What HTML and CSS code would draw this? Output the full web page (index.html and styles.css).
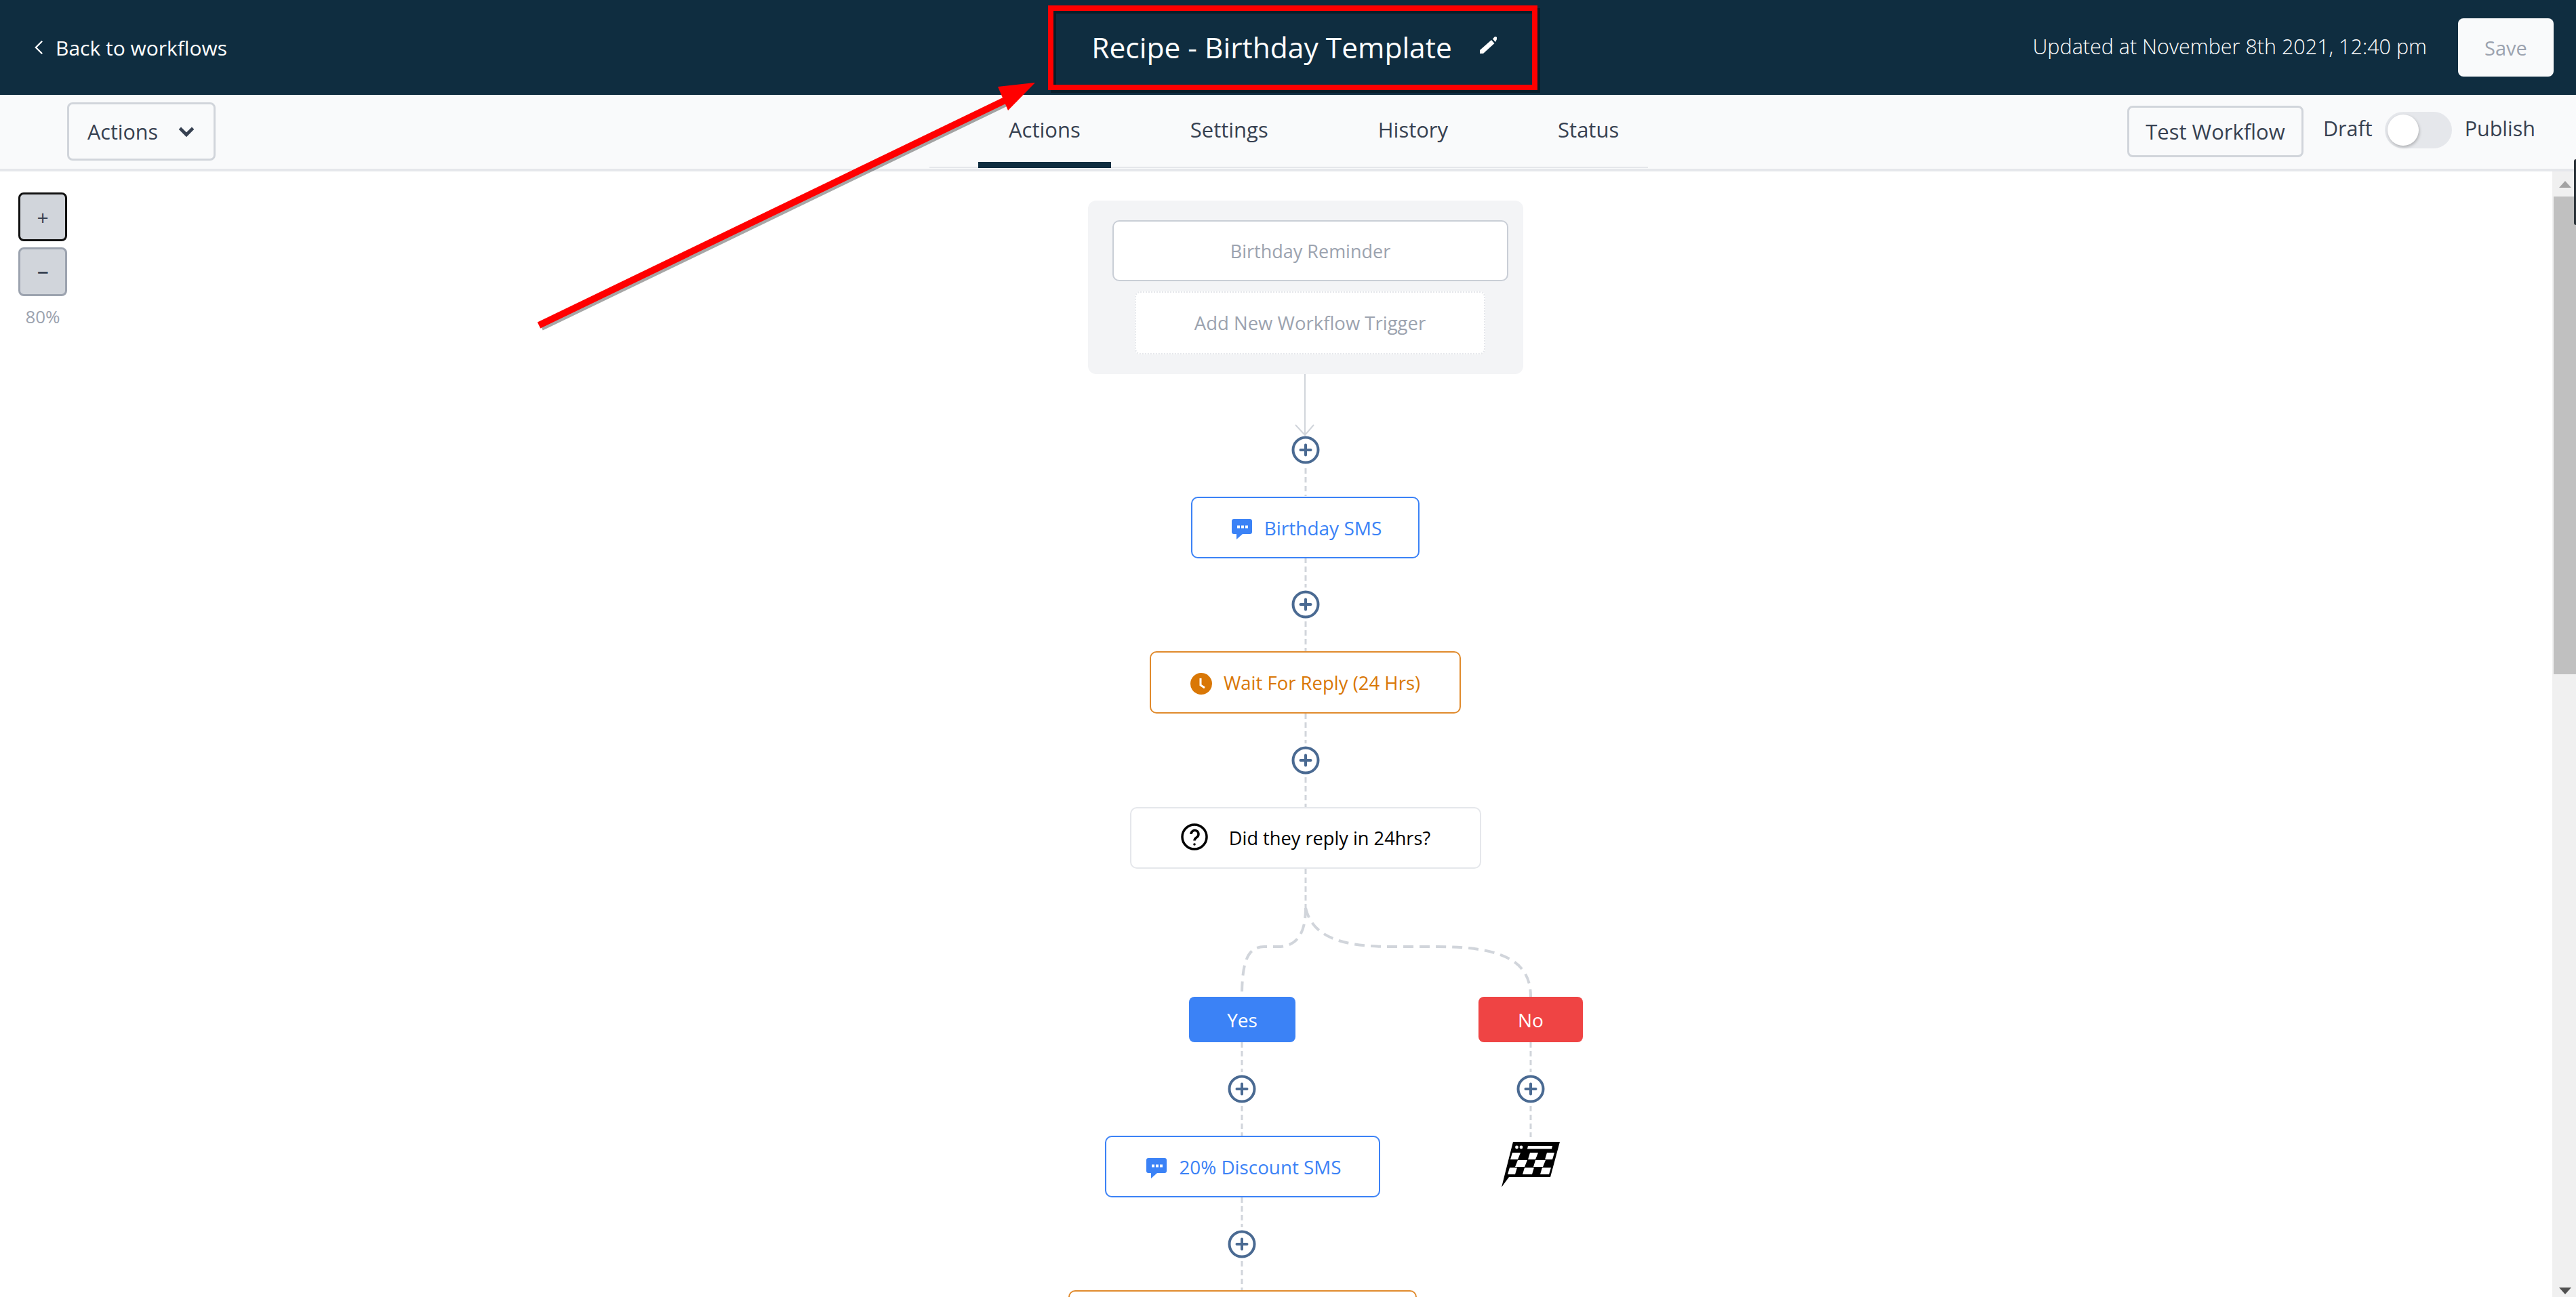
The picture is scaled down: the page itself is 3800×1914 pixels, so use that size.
FILE: index.html
```html
<!DOCTYPE html>
<html lang="en">
<head>
    <meta charset="UTF-8">
    <title>Recipe - Birthday Template</title>
    <link rel="stylesheet" href="styles.css">
</head>
<body>
    <header class="topbar">
        <a class="back-link">
            <svg class="back-icon" viewBox="0 0 14 24"><path d="M12 2 2 12l10 10"/></svg>
            <span>Back to workflows</span>
        </a>
        <div class="title-wrap">
            <h1>Recipe - Birthday Template</h1>
            <svg class="pencil" viewBox="0 0 25 26"><path d="M0 21 17 6l4.500 5L5 26H0z"/><path d="M19 4.500 21.500 1.500a2.500 2.500 0 0 1 3.500 3.500L23 9z"/></svg>
        </div>
        <div class="save-wrap">
            <span class="updated">Updated at November 8th 2021, 12:40 pm</span>
            <button class="save-btn">Save</button>
        </div>
    </header>

    <nav class="toolbar">
        <div class="toolbar-left">
            <button class="actions-btn">
                <span>Actions</span>
                <svg class="chevron" viewBox="0 0 22 14"><path d="M2 2l9 9 9-9"/></svg>
            </button>
        </div>
        <div class="tabs">
            <a class="tab tab-active">Actions</a>
            <a class="tab">Settings</a>
            <a class="tab">History</a>
            <a class="tab">Status</a>
        </div>
        <div class="toolbar-right">
            <button class="test-btn">Test Workflow</button>
            <span class="toggle-label">Draft</span>
            <span class="toggle"><span class="toggle-knob"></span></span>
            <span class="toggle-label">Publish</span>
        </div>
    </nav>

    <main class="canvas">
        <div class="zoom-controls">
            <button class="zoom-btn zoom-focus">+</button>
            <button class="zoom-btn zoom-minus">&minus;</button>
            <span class="zoom-value">80%</span>
        </div>

        <!-- connectors, page coordinates minus the 253px of bars -->
        <svg class="wires" viewBox="0 253 3800 1661">
            <path class="wire-solid" d="M1925 552V642M1911 627l14 15 13-15"/>
            <path class="wire-dash" d="M1926 691V732M1926 823V867M1926 917V961M1926 1053V1097M1926 1147V1191M1926 1282V1340"/>
            <path class="wire-dash" d="M1832 1538V1582M1832 1632V1676M1832 1767V1811M1832 1861V1904M2258 1538V1582M2258 1632V1678"/>
            <path class="wire-curve" d="M1926 1340C1926 1375 1915 1397 1885 1397H1865C1840 1397 1832 1420 1832 1471"/>
            <path class="wire-curve" d="M1926 1340C1935 1378 1970 1397 2050 1397H2120C2220 1397 2258 1420 2258 1471"/>
        </svg>

        <section class="trigger-card">
            <div class="trigger">Birthday Reminder</div>
            <div class="trigger-add">Add New Workflow Trigger</div>
        </section>

        <svg class="add add-1" viewBox="0 0 42 42"><circle cx="21" cy="21" r="18.500"/><path d="M21 13.500v15M13.500 21h15"/></svg>
        <svg class="add add-2" viewBox="0 0 42 42"><circle cx="21" cy="21" r="18.500"/><path d="M21 13.500v15M13.500 21h15"/></svg>
        <svg class="add add-3" viewBox="0 0 42 42"><circle cx="21" cy="21" r="18.500"/><path d="M21 13.500v15M13.500 21h15"/></svg>
        <svg class="add add-4" viewBox="0 0 42 42"><circle cx="21" cy="21" r="18.500"/><path d="M21 13.500v15M13.500 21h15"/></svg>
        <svg class="add add-5" viewBox="0 0 42 42"><circle cx="21" cy="21" r="18.500"/><path d="M21 13.500v15M13.500 21h15"/></svg>
        <svg class="add add-6" viewBox="0 0 42 42"><circle cx="21" cy="21" r="18.500"/><path d="M21 13.500v15M13.500 21h15"/></svg>

        <div class="node node-sms node-birthday">
            <svg class="node-icon sms-icon" viewBox="0 0 30 30"><path d="M3 0h24a3 3 0 0 1 3 3v16a3 3 0 0 1-3 3H16l-9 8v-8H3a3 3 0 0 1-3-3V3a3 3 0 0 1 3-3z"/><rect class="dot" x="8" y="9.500" width="4" height="4"/><rect class="dot" x="14" y="9.500" width="4" height="4"/><rect class="dot" x="20" y="9.500" width="4" height="4"/></svg>
            <span>Birthday SMS</span>
        </div>
        <div class="node node-wait node-reply">
            <svg class="node-icon clock-icon" viewBox="0 0 32 32"><circle cx="16" cy="16" r="16"/><path d="M15 8v10l6 4"/></svg>
            <span>Wait For Reply (24 Hrs)</span>
        </div>
        <div class="node node-cond">
            <svg class="node-icon help-icon" viewBox="0 0 40 40"><circle cx="20" cy="20" r="18"/><path d="M15 16a5.500 5.500 0 1 1 8.500 4.500c-2 1.300-3.500 2.300-3.500 5"/><circle class="help-dot" cx="20" cy="31" r="1.800"/></svg>
            <span>Did they reply in 24hrs?</span>
        </div>

        <div class="branch branch-yes">Yes</div>
        <div class="branch branch-no">No</div>

        <div class="node node-sms node-discount">
            <svg class="node-icon sms-icon" viewBox="0 0 30 30"><path d="M3 0h24a3 3 0 0 1 3 3v16a3 3 0 0 1-3 3H16l-9 8v-8H3a3 3 0 0 1-3-3V3a3 3 0 0 1 3-3z"/><rect class="dot" x="8" y="9.500" width="4" height="4"/><rect class="dot" x="14" y="9.500" width="4" height="4"/><rect class="dot" x="20" y="9.500" width="4" height="4"/></svg>
            <span>20% Discount SMS</span>
        </div>
        <div class="node node-wait node-cut"></div>

        <svg class="flag" viewBox="0 0 86 67">
            <path d="M17 0H86L72 52H11L0 67z"/>
            <g class="flag-white">
                <circle cx="22.500" cy="8" r="2.400"/><circle cx="29" cy="8" r="2.400"/>
                <path d="M39 6H75L74 10.500H38z"/>
                <path d="M16 16H28L24 26H13zM42 16H54L50 26H39zM67 16H78L75 26H64z"/>
                <path d="M24 27H38L34 37H20zM50 27H65L61 37H47z"/>
                <path d="M12 38H23L20 48H9zM34 38H48L45 48H31zM60 38H73L70 48H57z"/>
            </g>
        </svg>

        <div class="scrollbar">
            <span class="scroll-up"></span>
            <span class="scroll-thumb"></span>
            <span class="scroll-down"></span>
        </div>
    </main>

    <div class="edge-tab"></div>

    <!-- annotation drawn over the screenshot -->
    <svg class="annotation" viewBox="0 0 3800 1914">
        <g class="annot-shadow" transform="translate(4 4)">
            <rect x="1550" y="12" width="714" height="117"/>
            <path class="annot-arrow" d="M795 480 1495 142"/>
        </g>
        <rect class="annot-box" x="1550" y="12" width="714" height="117"/>
        <path class="annot-arrow" d="M795 480 1495 142"/>
        <path class="annot-head" d="M1527 122 1472 128 1487 163z"/>
    </svg>
</body>
</html>
```

FILE: styles.css
```css
* {
    box-sizing: border-box;
}

html, body {
    height: 100%;
}

body {
    margin: 0;
    font-family: "Open Sans", "Noto Sans", sans-serif;
    color: #374151;
    background: white;
    overflow: hidden;
    position: relative;
}

button {
    font-family: inherit;
}

.topbar {
    height: 140px;
    background: #0f2d40;
    color: white;
    display: grid;
    grid-template-columns: 1fr auto 1fr;
    align-items: center;
    padding: 0 33px 0 51px;
}

.back-link {
    display: flex;
    align-items: center;
    gap: 18px;
    font-size: 30px;
}

.back-icon {
    width: 13px;
    height: 24px;
    fill: none;
    stroke: white;
    stroke-width: 2.500;
}

.title-wrap {
    display: flex;
    align-items: center;
    gap: 41px;
    margin-bottom: 2px;
}

h1 {
    margin: 0;
    font-size: 42.500px;
    font-weight: 400;
}

.pencil {
    width: 25px;
    height: 26px;
    fill: white;
    margin-bottom: 6px;
}

.save-wrap {
    display: flex;
    align-items: center;
    justify-content: flex-end;
    gap: 46px;
}

.updated {
    font-size: 30.500px;
    font-weight: 300;
    margin-bottom: 5px;
}

.save-btn {
    width: 141px;
    height: 86px;
    border: 0;
    border-radius: 8px;
    background: #f9fafb;
    color: #9ca3af;
    font-size: 29px;
}

.toolbar {
    height: 113px;
    background: #f9fafb;
    border-bottom: 4px solid #e5e7eb;
    display: grid;
    grid-template-columns: 1fr auto 1fr;
    padding: 0 60px 0 62px;
    position: relative;
}

.actions-btn {
    margin: 11px 0 0 37px;
    width: 219px;
    height: 86px;
    border: 3px solid #d1d5db;
    border-radius: 8px;
    background: #f9fafb;
    color: #374151;
    font-size: 30.500px;
    display: flex;
    align-items: center;
    justify-content: space-between;
    padding: 0 28px 0 27px;
}

.chevron {
    width: 24px;
    height: 15px;
    fill: none;
    stroke: #374151;
    stroke-width: 4.500;
}

.tabs {
    width: 1060px;
    height: 108px;
    display: flex;
    align-items: flex-start;
    gap: 72px;
    border-bottom: 2px solid #e5e7eb;
    padding-left: 72px;
}

.tab {
    height: 108px;
    padding: 30px 45px 0;
    font-size: 31px;
    font-weight: 500;
    color: #374151;
}

.tab-active {
    border-bottom: 9px solid #0f2d40;
}

.toolbar-right {
    display: flex;
    align-items: flex-start;
    justify-content: flex-end;
}

.test-btn {
    margin-top: 16px;
    width: 260px;
    height: 76px;
    border: 3px solid #d1d5db;
    border-radius: 8px;
    background: #f9fafb;
    color: #374151;
    font-size: 31px;
    font-weight: 500;
    padding: 0;
}

.toggle-label {
    margin: 28px 0 0 29px;
    font-size: 30.500px;
    font-weight: 500;
}

.toggle {
    margin: 25px -10px 0 18px;
    width: 99px;
    height: 54px;
    border-radius: 27px;
    background: #e5e7eb;
    padding: 4px;
}

.toggle-knob {
    display: block;
    width: 46px;
    height: 46px;
    border-radius: 50%;
    background: white;
    box-shadow: 1px 2px 4px rgba(0, 0, 0, 0.25);
}

.canvas {
    position: absolute;
    top: 253px;
    left: 0;
    right: 0;
    bottom: 0;
    background: white;
}

.zoom-controls {
    position: absolute;
    top: 31px;
    left: 27px;
    width: 72px;
    display: flex;
    flex-direction: column;
    align-items: center;
    gap: 9px;
}

.zoom-btn {
    width: 72px;
    height: 72px;
    border: 3px solid #9ca3af;
    border-radius: 8px;
    background: #d1d5db;
    color: #374151;
    font-size: 30px;
    padding: 0;
}

.zoom-focus {
    border-color: #111;
}

.zoom-minus {
    font-weight: 600;
}

.zoom-value {
    margin-top: 3px;
    font-size: 26px;
    color: #9ca3af;
}

.wires {
    position: absolute;
    top: 0;
    left: 0;
    width: 3800px;
    height: 1661px;
    fill: none;
}

.wire-solid {
    stroke: #d1d5db;
    stroke-width: 2;
}

.wire-dash {
    stroke: #d1d5db;
    stroke-width: 3;
    stroke-dasharray: 8 5;
}

.wire-curve {
    stroke: #d1d5db;
    stroke-width: 4;
    stroke-dasharray: 15 9;
}

.trigger-card {
    position: absolute;
    left: 1605px;
    top: 43px;
    width: 642px;
    height: 256px;
    background: #f3f4f6;
    border-radius: 12px;
    padding: 29px 22px 0 36px;
    color: #9ca3af;
    font-size: 27.500px;
}

.trigger {
    height: 90px;
    border: 2px solid #c9ced6;
    border-radius: 10px;
    background: white;
    font-size: 27px;
    display: flex;
    align-items: center;
    justify-content: center;
}

.trigger-add {
    width: 517px;
    height: 93px;
    margin: 15px 0 0 33px;
    border: 2px dotted #e5e7eb;
    border-radius: 8px;
    background: white;
    display: flex;
    align-items: center;
    justify-content: center;
}

.add {
    position: absolute;
    width: 42px;
    height: 42px;
    fill: white;
    stroke: #4a6a92;
    stroke-width: 4;
    stroke-linecap: round;
}

.add-1 { left: 1905px; top: 390px; }
.add-2 { left: 1905px; top: 618px; }
.add-3 { left: 1905px; top: 848px; }
.add-4 { left: 1811px; top: 1333px; }
.add-5 { left: 2237px; top: 1333px; }
.add-6 { left: 1811px; top: 1562px; }

.node {
    position: absolute;
    display: flex;
    align-items: center;
    justify-content: center;
    border-radius: 10px;
    background: white;
    font-size: 28px;
    border: 2px solid #e5e7eb;
}

.node-sms {
    border-color: #3b82f6;
    color: #3b82f6;
    gap: 18px;
    padding-left: 4px;
}

.node-wait {
    border-color: #e08a2c;
    color: #d97706;
    gap: 17px;
    font-size: 27.500px;
}

.node-cond {
    left: 1667px;
    top: 938px;
    width: 518px;
    height: 91px;
    color: black;
    gap: 31px;
    font-size: 27.200px;
}

.node-birthday { left: 1757px; top: 480px; width: 337px; height: 91px; }
.node-reply { left: 1696px; top: 708px; width: 459px; height: 92px; }
.node-discount { left: 1630px; top: 1423px; width: 406px; height: 91px; font-size: 27.800px; }
.node-cut { left: 1576px; top: 1651px; width: 514px; height: 91px; }

.sms-icon {
    width: 30px;
    height: 30px;
    fill: #3b82f6;
    margin-top: 4px;
}

.sms-icon .dot {
    fill: white;
}

.clock-icon {
    width: 32px;
    height: 32px;
    fill: #d97706;
    margin-top: 3px;
}

.clock-icon path {
    fill: none;
    stroke: white;
    stroke-width: 3;
}

.help-icon {
    width: 40px;
    height: 40px;
    fill: none;
    stroke: black;
    stroke-width: 3.500;
    margin-bottom: 4px;
}

.help-icon .help-dot {
    fill: black;
    stroke: none;
}

.branch {
    position: absolute;
    top: 1218px;
    height: 67px;
    border-radius: 8px;
    color: white;
    font-size: 28px;
    display: flex;
    align-items: center;
    justify-content: center;
}

.branch-yes { left: 1754px; width: 157px; background: #3b82f6; }
.branch-no { left: 2181px; width: 154px; background: #ef4444; }

.flag {
    position: absolute;
    left: 2215px;
    top: 1432px;
    width: 86px;
    height: 67px;
    fill: black;
}

.flag-white {
    fill: white;
}

.scrollbar {
    position: absolute;
    top: 0;
    right: 0;
    bottom: 0;
    width: 35px;
    background: #f0f0f0;
}

.scroll-up {
    position: absolute;
    top: 14px;
    left: 10px;
    border: 9px solid transparent;
    border-top: 0;
    border-bottom: 10px solid #a3a3a3;
}

.scroll-thumb {
    position: absolute;
    top: 37px;
    left: 2px;
    right: 0;
    height: 705px;
    background: #c0c0c0;
}

.scroll-down {
    position: absolute;
    bottom: 4px;
    left: 10px;
    border: 9px solid transparent;
    border-bottom: 0;
    border-top: 10px solid #505050;
}

.edge-tab {
    position: absolute;
    top: 235px;
    right: 0;
    width: 3px;
    height: 97px;
    background: #2a3238;
    border-radius: 3px 0 0 3px;
}

.annotation {
    position: absolute;
    top: 0;
    left: 0;
    width: 3800px;
    height: 1914px;
    fill: none;
    pointer-events: none;
}

.annot-box {
    stroke: #ff0000;
    stroke-width: 8;
}

.annot-arrow {
    stroke: #ff0000;
    stroke-width: 10;
}

.annot-head {
    fill: #ff0000;
}

.annot-shadow rect,
.annot-shadow path {
    stroke: rgba(0, 0, 0, 0.35);
    stroke-width: 8;
}
```
